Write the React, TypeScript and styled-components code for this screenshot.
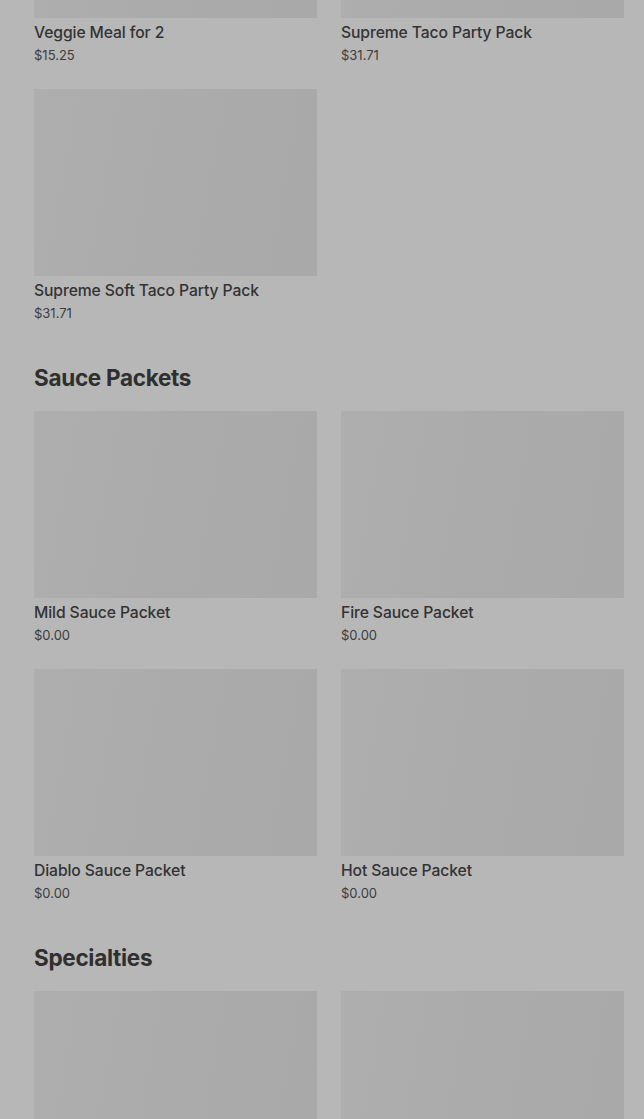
import React from 'react';
import styled, { createGlobalStyle } from 'styled-components';

const GlobalStyle = createGlobalStyle`
  html, body {
    margin: 0;
    padding: 0;
    background: #b7b7b7;
  }
  body {
    font-family: Inter, 'Noto Sans', 'Liberation Sans', sans-serif;
    -webkit-font-smoothing: antialiased;
  }
`;

const Page = styled.div`
  background: #b7b7b7;
  height: 1119px;
  overflow: hidden;
`;

// the menu is scrolled part way down the list
const Menu = styled.main`
  margin-top: -169px;
  padding: 0 20px 0 34px;
`;

const Section = styled.section`
  & + & {
    margin-top: 41px;
  }
`;

const SectionTitle = styled.h2`
  margin: 0 0 19px;
  font-size: 22.5px;
  line-height: 28px;
  font-weight: 700;
  letter-spacing: -0.3px;
  color: #2f2f2f;
`;

const Grid = styled.div`
  display: grid;
  grid-template-columns: 1fr 1fr;
  column-gap: 24px;
  row-gap: 24px;
`;

const Card = styled.div`
  display: flex;
  flex-direction: column;
`;

const Thumb = styled.div`
  height: 187px;
  background: linear-gradient(100deg, #aeaeae 0%, #ababab 45%, #a9a9a9 100%);
`;

const ItemName = styled.div`
  margin-top: 5px;
  font-size: 15.7px;
  line-height: 20px;
  font-weight: 500;
  letter-spacing: -0.1px;
  color: #333;
`;

const Price = styled.div`
  margin-top: 2px;
  font-size: 13px;
  line-height: 20px;
  font-weight: 400;
  color: #3d3d3d;
`;

type Item = { name?: string; price?: string };

const sections: { title?: string; items: Item[] }[] = [
  {
    items: [
      { name: 'Veggie Meal for 2', price: '$15.25' },
      { name: 'Supreme Taco Party Pack', price: '$31.71' },
      { name: 'Supreme Soft Taco Party Pack', price: '$31.71' },
    ],
  },
  {
    title: 'Sauce Packets',
    items: [
      { name: 'Mild Sauce Packet', price: '$0.00' },
      { name: 'Fire Sauce Packet', price: '$0.00' },
      { name: 'Diablo Sauce Packet', price: '$0.00' },
      { name: 'Hot Sauce Packet', price: '$0.00' },
    ],
  },
  {
    title: 'Specialties',
    // only the photos are in view for this section
    items: [{}, {}],
  },
];

const App = () => {
  return (
    <Page>
      <GlobalStyle />
      <Menu>
        {sections.map((section, i) => (
          <Section key={i}>
            {section.title && <SectionTitle>{section.title}</SectionTitle>}
            <Grid>
              {section.items.map((item, j) => (
                <Card key={j}>
                  <Thumb />
                  {item.name && <ItemName>{item.name}</ItemName>}
                  {item.price && <Price>{item.price}</Price>}
                </Card>
              ))}
            </Grid>
          </Section>
        ))}
      </Menu>
    </Page>
  );
};

export default App;
